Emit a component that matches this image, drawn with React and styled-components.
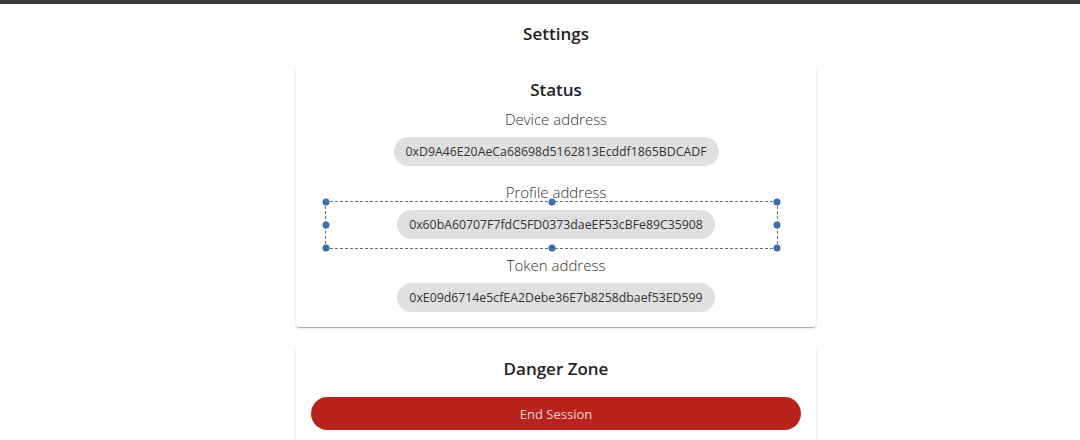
import React from 'react';
import styled, { createGlobalStyle } from 'styled-components';

const GlobalStyle = createGlobalStyle`
  body {
    margin: 0;
    background: #ffffff;
    font-family: 'Open Sans', 'Noto Sans', sans-serif;
    color: #222;
  }
`;

const TopBar = styled.div`
  height: 4px;
  background: #3b3b3b;
`;

const Page = styled.main`
  display: flex;
  flex-direction: column;
  align-items: center;
  padding: 0 0 0 32px;
`;

const PageTitle = styled.h1`
  margin: 19px 0 0;
  font-size: 17px;
  line-height: 22px;
  font-weight: 600;
  color: #222;
`;

const Card = styled.section`
  box-sizing: border-box;
  width: 520px;
  margin-top: ${(p) => p.$top}px;
  padding: ${(p) => p.$padTop}px 15px 15px;
  background: #fff;
  border-radius: 4px;
  box-shadow: 0px 2px 1px -1px rgba(0, 0, 0, 0.2),
    0px 1px 1px 0px rgba(0, 0, 0, 0.14), 0px 1px 3px 0px rgba(0, 0, 0, 0.12);
  display: flex;
  flex-direction: column;
  align-items: stretch;
`;

const CardTitle = styled.h2`
  margin: 0 0 ${(p) => p.$gap}px;
  text-align: center;
  font-size: 17px;
  line-height: 24px;
  font-weight: 600;
  color: #222;
`;

const FieldList = styled.div`
  display: flex;
  flex-direction: column;
  gap: 16px;
`;

const Field = styled.div`
  display: flex;
  flex-direction: column;
  align-items: center;
  gap: 8px;
`;

const Label = styled.div`
  font-size: 15px;
  line-height: 20px;
  font-weight: 300;
  color: #333;
`;

const PillRow = styled.div`
  position: relative;
  align-self: stretch;
  display: flex;
  justify-content: center;
`;

const Pill = styled.div`
  height: 29px;
  padding: 0 12px;
  border-radius: 15px;
  background: #e0e0e0;
  display: flex;
  align-items: center;
  font-size: 12.3px;
  color: #333;
  white-space: nowrap;
`;

const Selection = styled.div`
  position: absolute;
  top: -9px;
  bottom: -10px;
  left: 14px;
  right: 23px;
  border: 1px dashed #6a7480;
  pointer-events: none;
`;

const Handle = styled.span`
  position: absolute;
  width: 7px;
  height: 7px;
  border-radius: 50%;
  background: #3d6ea8;
  left: ${(p) => p.$x};
  top: ${(p) => p.$y};
  transform: translate(-50%, -50%);
`;

const DangerButton = styled.button`
  height: 33px;
  border: none;
  border-radius: 17px;
  background: #b8231c;
  color: #f5d2ce;
  font-family: inherit;
  font-size: 13px;
  cursor: pointer;
`;

const handles = [
  ['0%', '0%'], ['50%', '0%'], ['100%', '0%'],
  ['0%', '50%'], ['100%', '50%'],
  ['0%', '100%'], ['50%', '100%'], ['100%', '100%'],
];

const fields = [
  { label: 'Device address', value: '0xD9A46E20AeCa68698d5162813Ecddf1865BDCADF' },
  { label: 'Profile address', value: '0x60bA60707F7fdC5FD0373daeEF53cBFe89C35908', selected: true },
  { label: 'Token address', value: '0xE09d6714e5cfEA2Debe36E7b8258dbaef53ED599' },
];

const App = () => {
  return (
    <>
      <GlobalStyle />
      <TopBar />
      <Page>
        <PageTitle>Settings</PageTitle>
        <Card $top={21} $padTop={12}>
          <CardTitle $gap={7}>Status</CardTitle>
          <FieldList>
            {fields.map((f) => (
              <Field key={f.label}>
                <Label>{f.label}</Label>
                <PillRow>
                  <Pill>{f.value}</Pill>
                  {f.selected && (
                    <Selection>
                      {handles.map(([x, y]) => (
                        <Handle key={x + y} $x={x} $y={y} />
                      ))}
                    </Selection>
                  )}
                </PillRow>
              </Field>
            ))}
          </FieldList>
        </Card>
        <Card $top={19} $padTop={11}>
          <CardTitle $gap={16}>Danger Zone</CardTitle>
          <DangerButton>End Session</DangerButton>
        </Card>
      </Page>
    </>
  );
};

export default App;
